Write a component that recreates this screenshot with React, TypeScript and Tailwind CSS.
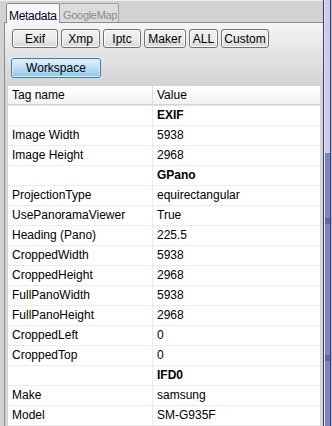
import React from 'react';

type Row = { tag: string; value: string; group?: boolean };

const rows: Row[] = [
  { tag: '', value: 'EXIF', group: true },
  { tag: 'Image Width', value: '5938' },
  { tag: 'Image Height', value: '2968' },
  { tag: '', value: 'GPano', group: true },
  { tag: 'ProjectionType', value: 'equirectangular' },
  { tag: 'UsePanoramaViewer', value: 'True' },
  { tag: 'Heading (Pano)', value: '225.5' },
  { tag: 'CroppedWidth', value: '5938' },
  { tag: 'CroppedHeight', value: '2968' },
  { tag: 'FullPanoWidth', value: '5938' },
  { tag: 'FullPanoHeight', value: '2968' },
  { tag: 'CroppedLeft', value: '0' },
  { tag: 'CroppedTop', value: '0' },
  { tag: '', value: 'IFD0', group: true },
  { tag: 'Make', value: 'samsung' },
  { tag: 'Model', value: 'SM-G935F' },
];

const buttons = [
  { label: 'Exif', w: 'w-[46px]' },
  { label: 'Xmp', w: 'w-[39px]' },
  { label: 'Iptc', w: 'w-[38px]' },
  { label: 'Maker', w: 'w-[42px]' },
  { label: 'ALL', w: 'w-[29px]' },
  { label: 'Custom', w: 'w-[48px]' },
];

function ToolButton({ label, w }: { label: string; w: string }) {
  return (
    <button className={`${w} h-[19px] rounded-[3px] border border-[#707070] bg-gradient-to-b from-[#f2f2f2] via-[#ebebeb] to-[#d6d6d6] text-[12px] leading-none text-black shadow-[inset_0_0_0_1px_#fcfcfc]`}>
      {label}
    </button>
  );
}

export default function App() {
  return (
    <div className="w-[332px] h-[426px] flex overflow-hidden bg-[#d2d2d2] font-['Liberation_Sans',Arial,sans-serif] text-black">
      <div className="flex-1 flex flex-col pl-[4px] border-t border-[#eeeef4]">
        {/* tabs */}
        <div className="h-[21px] flex items-end pl-[2px] pt-[2px]">
          <div className="relative z-10 -mb-px w-[54px] h-[20px] border border-b-0 border-[#8c8c8c] rounded-t-[2px] bg-[#f7f7f7] text-[12px] tracking-[-0.3px] pl-[2px] pt-[3px] text-[#00002a] whitespace-nowrap">
            Metadata
          </div>
          <div className="w-[59px] h-[19px] border border-l-0 border-b-0 border-[#a0a0a0] rounded-t-[2px] bg-[#dcdcdc] text-[11px] tracking-[-0.3px] pl-[3px] pt-[3px] text-[#8a8a8a] whitespace-nowrap">
            GoogleMap
          </div>
        </div>
        {/* panel */}
        <div className="flex-1 flex flex-col border-l border-t border-[#8c8c8c] bg-gradient-to-b from-[#f5f5f5] from-0% via-[#d4d4d4] via-[15%] to-[#d4d4d4] pr-[3px]">
          <div className="flex gap-[3px] pl-[7px] pt-[6px]">
            {buttons.map((b) => (
              <ToolButton key={b.label} label={b.label} w={b.w} />
            ))}
          </div>
          <div className="pl-[6px] pt-[7px]">
            <button className="w-[90px] h-[20px] rounded-[3px] border border-[#3c7fb1] bg-gradient-to-b from-[#e5f4fc] via-[#b9def4] to-[#8cc6ea] text-[12px] leading-none text-black shadow-[inset_0_0_0_1px_#d8eefa]">
              Workspace
            </button>
          </div>
          {/* table */}
          <div className="flex-1 mt-[7px] ml-[3px] bg-white">
            <div className="flex h-[19px] border-b border-[#d5d5d5] bg-gradient-to-b from-white to-[#f1f2f4] text-[12px] leading-[18px]">
              <div className="w-[145px] pl-[4px] border-r border-[#dcdcdc]">Tag name</div>
              <div className="flex-1 pl-[4px]">Value</div>
            </div>
            <div className="h-px bg-[#e4e4e4]" />
            {rows.map((r, i) => (
              <div key={i} className="flex h-[20px] border-b border-[#ececec] text-[12px] leading-[19px]">
                <div className="w-[145px] pl-[4px] border-r border-[#ececec]">{r.tag}</div>
                <div className={`flex-1 pl-[4px] ${r.group ? 'font-bold' : ''}`}>{r.value}</div>
              </div>
            ))}
          </div>
        </div>
      </div>
      {/* window frame / scrollbar strip */}
      <div className="w-[9px] flex border-l border-[#3e3e58]">
        <div className="w-px bg-[#e2e4f2]" />
        <div className="flex-1 flex flex-col">
          <div className="h-[153px] bg-[#c9cde9]" />
          <div className="flex-1 bg-[#7a86c6] flex flex-col justify-around">
            <div className="h-[6px] bg-[#5c67a8]" />
            <div className="h-[6px] bg-[#5c67a8]" />
          </div>
        </div>
        <div className="w-px bg-[#3e3e58]" />
        <div className="w-px bg-[#b8bcdc]" />
      </div>
    </div>
  );
}
